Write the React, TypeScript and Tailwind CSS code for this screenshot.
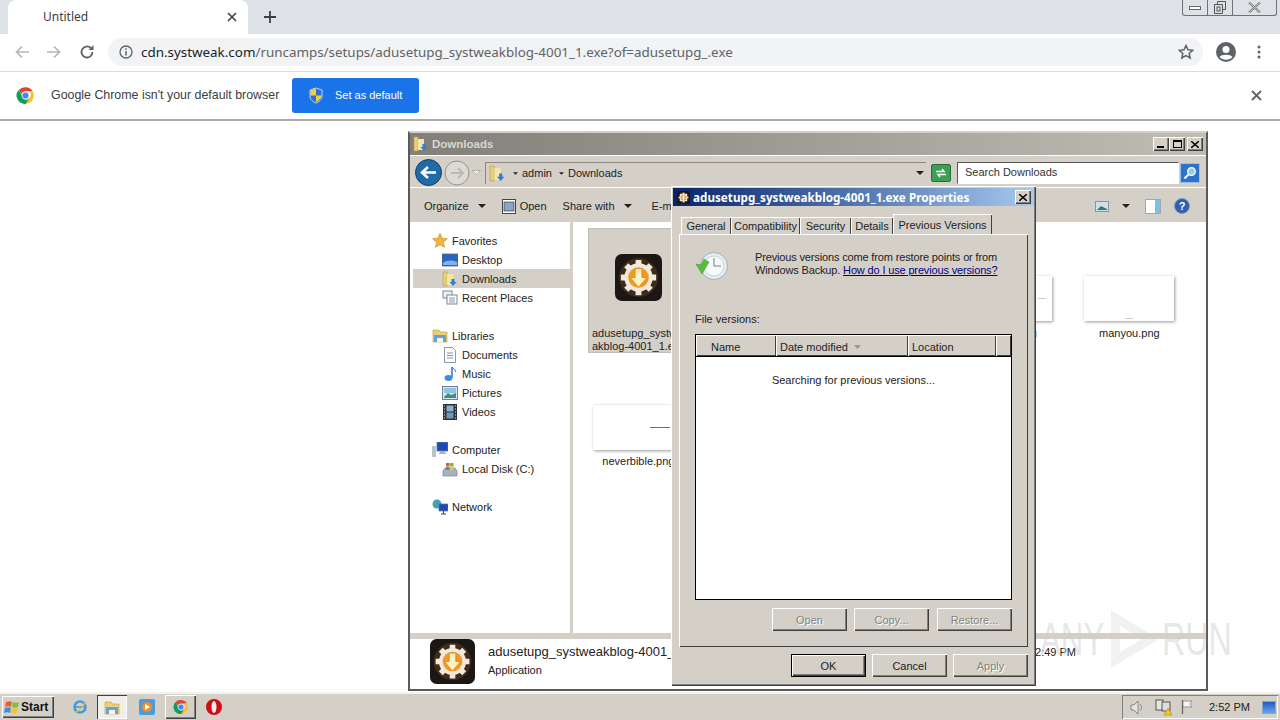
import type { ReactNode } from 'react';

const RAISED = 'shadow-[inset_1px_1px_0_#fff,inset_-1px_-1px_0_#404040,inset_-2px_-2px_0_#808080]';

const ChromeLogo = ({ size = 20 }: { size?: number }) => (
  <svg width={size} height={size} viewBox="0 0 48 48">
    <path d="M24 3a21 21 0 0 1 18.2 10.5H24a10.5 10.5 0 0 0-9.9 7L7 10A21 21 0 0 1 24 3z" fill="#db4437" />
    <path d="M42.2 13.5A21 21 0 0 1 25 45l9-15.5a10.5 10.5 0 0 0-1.5-16z" fill="#fbc02d" />
    <path d="M25 45A21 21 0 0 1 7 10l9 15.5a10.5 10.5 0 0 0 12.5 8.9l5.5-4.9z" fill="#0f9d58" />
    <circle cx="24" cy="24" r="9" fill="#4285f4" stroke="#fff" strokeWidth="2" />
  </svg>
);

const Shield = () => (
  <svg width="16" height="17" viewBox="0 0 16 17">
    <path d="M8 1l6 2v6c0 3.500-3 6-6 7-3-1-6-3.500-6-7V3z" fill="#2f6fd0" stroke="#e8eef8" strokeWidth="0.8" />
    <path d="M8 1.500V8.500H2.500V3.500z" fill="#f5cf3a" />
    <path d="M8 8.500h5.500c-.3 3-3 5.500-5.500 6.500z" fill="#f5cf3a" />
  </svg>
);

const GearApp = ({ size }: { size: number }) => (
  <svg width={size} height={size} viewBox="0 0 48 48" className="shrink-0">
    <rect width="48" height="48" rx="7" fill="#1b1714" />
    <circle cx="24" cy="24" r="20" fill="#5c3d1c" opacity="0.55" />
    <g stroke="#efe9df" strokeWidth="6">
      <path d="M24 6v36M6 24h36M11.500 11.500l25 25M36.500 11.500l-25 25" />
    </g>
    <circle cx="24" cy="24" r="14.500" fill="#efe9df" />
    <circle cx="24" cy="24" r="10.500" fill="#f09a1f" />
    <path d="M20.500 15h7v9h5L24 34l-8.500-10h5z" fill="#fff3c4" stroke="#e8791a" strokeWidth="0.8" />
  </svg>
);

const FolderDown = ({ size = 16 }: { size?: number }) => (
  <svg width={size} height={size} viewBox="0 0 16 16" className="shrink-0">
    <path d="M1 1h4v14H1z" fill="#e9cf78" stroke="#b89b45" strokeWidth="0.6" />
    <path d="M5 3h6v11H5z" fill="#f4e6a8" />
    <path d="M9.500 8h3v3h2l-3.500 4-3.500-4h2z" fill="#2d7fd3" />
  </svg>
);

const Star = () => (
  <svg width="17" height="17" viewBox="0 0 16 16">
    <path d="M8 .8l2.200 4.800 5.200.6-3.900 3.500 1.100 5.200L8 12.300l-4.600 2.600 1.100-5.200L.6 6.200l5.200-.6z" fill="#f2b33d" stroke="#c98a24" strokeWidth="0.6" />
  </svg>
);

const Monitor = () => (
  <svg width="16" height="14" viewBox="0 0 16 14">
    <rect width="16" height="12" y="1" fill="#2c62c0" stroke="#5a6a80" strokeWidth="0.8" />
    <path d="M1 10c4-3 9-3 14-1v3H1z" fill="#7fb2ee" />
  </svg>
);

const DocIcon = () => (
  <svg width="14" height="16" viewBox="0 0 14 16">
    <path d="M1.500 .5h8l3 3v12h-11z" fill="#fff" stroke="#8c98a8" />
    <path d="M4 6h6M4 8.500h6M4 11h6" stroke="#7f8fa5" />
  </svg>
);

const RecentIcon = () => (
  <svg width="16" height="16" viewBox="0 0 16 16">
    <rect x="1" y="1" width="9" height="7" fill="#eef1f4" stroke="#7d8794" />
    <rect x="5" y="5" width="10" height="9" fill="#fff" stroke="#7d8794" />
    <path d="M7 8h6M7 10h6M7 12h6" stroke="#8996a5" />
  </svg>
);

const LibraryIcon = () => (
  <svg width="16" height="15" viewBox="0 0 16 15">
    <path d="M1 2h6l1 2h7v10H1z" fill="#e9cf78" stroke="#b89b45" strokeWidth="0.6" />
    <path d="M2 7h12v7H2z" fill="#6aa3cf" />
    <path d="M5 14v-4h6v4" fill="#f2f6fa" />
  </svg>
);

const MusicIcon = () => (
  <svg width="16" height="16" viewBox="0 0 16 16">
    <path d="M10 1v10.500" stroke="#2f7fd0" strokeWidth="1.600" />
    <path d="M10 1c1 2 4 2 3.500 5" stroke="#2f7fd0" fill="none" />
    <ellipse cx="6.500" cy="12" rx="4" ry="3" fill="#3f8fe0" />
  </svg>
);

const PictureIcon = () => (
  <svg width="16" height="14" viewBox="0 0 16 14">
    <rect x=".5" y=".5" width="15" height="13" fill="#dbe6ee" stroke="#75808c" />
    <rect x="2" y="2" width="12" height="5" fill="#8fc4e4" />
    <path d="M2 11l4-4 3 2 5-2v5H2z" fill="#3d8f7e" />
  </svg>
);

const VideoIcon = () => (
  <svg width="14" height="16" viewBox="0 0 14 16">
    <rect width="14" height="16" fill="#2c3138" />
    <rect x="3.500" y="1.500" width="7" height="6" fill="#8ab0d0" />
    <rect x="3.500" y="8.500" width="7" height="6" fill="#6f97bb" />
    <path d="M1 2h1M1 5h1M1 8h1M1 11h1M1 14h1M12 2h1M12 5h1M12 8h1M12 11h1M12 14h1" stroke="#dfe6ec" />
  </svg>
);

const ComputerIcon = () => (
  <svg width="16" height="15" viewBox="0 0 16 15">
    <rect x="0" y="4" width="4" height="11" fill="#b8c2cc" />
    <rect x="5" y="0" width="11" height="9" fill="#1d49b8" stroke="#6c7c90" strokeWidth="0.8" />
    <path d="M8 9h5l1 3H7z" fill="#a9b3bf" />
  </svg>
);

const DiskIcon = () => (
  <svg width="16" height="16" viewBox="0 0 16 16">
    <path d="M1 10l2-3h10l2 3v5H1z" fill="#a7b2bd" stroke="#6b7683" strokeWidth="0.6" />
    <rect x="4" y="2" width="3.500" height="3.500" fill="#e2582f" />
    <rect x="8" y="2" width="3.500" height="3.500" fill="#7fba3c" />
    <rect x="4" y="6" width="3.500" height="3" fill="#3f8fe0" />
    <rect x="8" y="6" width="3.500" height="3" fill="#f5c32e" />
  </svg>
);

const NetworkIcon = () => (
  <svg width="16" height="16" viewBox="0 0 16 16">
    <circle cx="5" cy="5" r="4.500" fill="#3a9fd8" />
    <path d="M2 3c2-1 3 1 3 2S3 7 2 5z" fill="#57b04a" />
    <rect x="7" y="5" width="9" height="7" fill="#1d49b8" stroke="#66768a" strokeWidth="0.7" />
    <path d="M11.500 12v3M9 15h5" stroke="#3c4654" />
  </svg>
);

const ClockIcon = () => (
  <svg width="34" height="32" viewBox="0 0 34 32" className="shrink-0">
    <circle cx="19" cy="16" r="13.500" fill="#e6edf0" stroke="#9fb0b8" />
    <circle cx="19" cy="16" r="10" fill="#f7fafa" stroke="#c6d2d6" />
    <path d="M19 8v8h7" stroke="#6e7f88" fill="none" />
    <path d="M1 14l5 1 3-6 5 3-7 12z" fill="#5cba3c" stroke="#3d8f2a" strokeWidth="0.5" />
  </svg>
);

const Caret = ({ small }: { small?: boolean }) => (
  <svg width={small ? 5 : 8} height={small ? 3 : 4} viewBox="0 0 8 4" className="shrink-0">
    <path d="M0 0h8L4 4z" fill="#222" />
  </svg>
);

const TitleBtn = ({ children }: { children: ReactNode }) => (
  <div className={`w-[16px] h-[14px] bg-[#d4d0c8] flex items-center justify-center ${RAISED}`}>{children}</div>
);

const NavRow = ({ icon, label, child, active }: { icon: ReactNode; label: string; child?: boolean; active?: boolean }) => (
  <div className={`h-[19px] flex items-center ${child ? 'pl-[29px]' : 'pl-[19px]'} ${active ? 'bg-[#d4d0c8]' : ''}`}>
    <span className="w-[16px] flex justify-center shrink-0">{icon}</span>
    <span className="ml-[4px] pt-[2px]">{label}</span>
  </div>
);

const DisabledBtn = ({ label, className = '' }: { label: string; className?: string }) => (
  <div className={`w-[75px] h-[23px] pt-[2px] flex items-center justify-center text-[#85827a] [text-shadow:1px_1px_0_#fff] ${RAISED} ${className}`}>
    {label}
  </div>
);

const Tab = ({ label, w }: { label: string; w: string }) => (
  <div className={`${w} h-[17px] pt-[2px] flex items-center justify-center bg-[#d4d0c8] shadow-[inset_1px_1px_0_#fff,inset_-1px_0_0_#404040]`}>{label}</div>
);

const HeaderCell = ({ className, children }: { className: string; children?: ReactNode }) => (
  <div className={`flex items-center pt-[3px] shadow-[inset_1px_1px_0_#fff,inset_-1px_-1px_0_#404040] ${className}`}>{children}</div>
);

export default function App() {
  return (
    <div className="relative w-[1280px] h-[720px] overflow-hidden bg-white flex flex-col text-[#222] font-['Liberation_Sans',sans-serif]">
      {/* chrome tab strip */}
      <div className="h-[34px] shrink-0 bg-[#dee1e6] flex items-end pl-[8px] relative font-['Noto_Sans',sans-serif]">
        <div className="w-[240px] h-[34px] bg-white rounded-t-[8px] flex items-center pl-[35px] pr-[11px] text-[12px] text-[#3c4043]">
          <span className="flex-1">Untitled</span>
          <svg width="10" height="10" viewBox="0 0 10 10"><path d="M1 1l8 8M9 1l-8 8" stroke="#3c4043" strokeWidth="1.600" /></svg>
        </div>
        <svg width="12" height="12" viewBox="0 0 12 12" className="ml-[16px] mb-[11px]"><path d="M6 0v12M0 6h12" stroke="#3c4043" strokeWidth="1.800" /></svg>
        <div className="absolute top-0 right-[3px] w-[95px] h-[16px] flex rounded-b-[3px] border border-t-0 border-[#6d7178] text-[#444]">
          <div className="w-[25px] flex items-center justify-center border-r border-[#6d7178]"><div className="w-[12px] h-[4px] border border-[#666] bg-white" /></div>
          <div className="w-[25px] flex items-center justify-center border-r border-[#6d7178]">
            <svg width="12" height="13" viewBox="0 0 12 13"><path d="M3.500 3V.5h8v8H9M.5 3.500h8v9h-8z" fill="none" stroke="#555" /><rect x="3" y="6" width="3" height="4" fill="none" stroke="#555" /></svg>
          </div>
          <div className="flex-1 flex items-center justify-center">
            <svg width="13" height="11" viewBox="0 0 13 11"><path d="M1 .5l11 10M12 .5L1 10.500" stroke="#666" strokeWidth="2" /><path d="M1 .5l11 10M12 .5L1 10.500" stroke="#fff" strokeWidth="0.7" /></svg>
          </div>
        </div>
      </div>

      {/* chrome toolbar */}
      <div className="h-[38px] shrink-0 flex items-center border-b border-[#dadce0] pb-px font-['Noto_Sans',sans-serif]">
        <div className="w-[108px] flex items-center pl-[15px] gap-[18px]">
          <svg width="14" height="14" viewBox="0 0 14 14"><path d="M14 7H2M7 1.500L1.500 7 7 12.500" fill="none" stroke="#b4b7bb" strokeWidth="1.700" /></svg>
          <svg width="14" height="14" viewBox="0 0 14 14"><path d="M0 7h12M7 1.500L12.500 7 7 12.500" fill="none" stroke="#b4b7bb" strokeWidth="1.700" /></svg>
          <svg width="16" height="16" viewBox="0 0 16 16"><path d="M13.500 8A5.500 5.500 0 1 1 11.800 4" fill="none" stroke="#5f6368" strokeWidth="1.800" /><path d="M14.500 1v5h-5z" fill="#5f6368" /></svg>
        </div>
        <div className="w-[1095px] h-[28px] rounded-full bg-[#f1f3f4] flex items-center pl-[11px] pr-[9px]">
          <svg width="14" height="14" viewBox="0 0 14 14"><circle cx="7" cy="7" r="6" fill="none" stroke="#5f6368" strokeWidth="1.300" /><path d="M7 6v4.500M7 3.200v1.500" stroke="#5f6368" strokeWidth="1.500" /></svg>
          <div className="ml-[8px] flex-1 text-[13.400px] text-[#5f6368] whitespace-nowrap">
            <span className="text-[#202124]">cdn.systweak.com</span>/runcamps/setups/adusetupg_systweakblog-4001_1.exe?of=adusetupg_.exe
          </div>
          <svg width="16" height="16" viewBox="0 0 16 16"><path d="M8 1.500l2 4.300 4.700.5-3.500 3.100 1 4.600L8 11.600l-4.200 2.400 1-4.600-3.500-3.100 4.700-.5z" fill="none" stroke="#5f6368" strokeWidth="1.500" /></svg>
        </div>
        <svg width="20" height="20" viewBox="0 0 20 20" className="ml-[13px]"><circle cx="10" cy="10" r="10" fill="#5f6368" /><circle cx="10" cy="7.500" r="3.500" fill="#fff" /><path d="M3.500 15c2-3 11-3 13 0-3 3.500-10 3.500-13 0z" fill="#fff" /></svg>
        <svg width="4" height="14" viewBox="0 0 4 14" className="ml-[21px]"><circle cx="2" cy="2" r="1.500" fill="#5f6368" /><circle cx="2" cy="7" r="1.500" fill="#5f6368" /><circle cx="2" cy="12" r="1.500" fill="#5f6368" /></svg>
      </div>

      {/* default browser bar */}
      <div className="h-[49px] shrink-0 flex items-center pl-[16px] pr-[18px] border-b-2 border-[#a9a9a9] text-[12.400px] text-[#3c4043]">
        <ChromeLogo size={19} />
        <span className="ml-[16px] w-[241px]">Google Chrome isn't your default browser</span>
        <div className="w-[127px] h-[35px] rounded-[3px] bg-[#1a73e8] flex items-center pl-[16px] text-white text-[11px] gap-[11px]">
          <Shield />
          <span>Set as default</span>
        </div>
        <svg width="11" height="11" viewBox="0 0 11 11" className="ml-auto"><path d="M1 1l9 9M10 1l-9 9" stroke="#5f6368" strokeWidth="1.800" /></svg>
      </div>

      {/* page area */}
      <div className="flex-1 relative bg-white">
        {/* explorer window */}
        <div className="absolute left-[408px] top-[10px] w-[800px] h-[560px] bg-white border-2 border-[#5a5a5a] border-t-[#d4d0c8] flex flex-col text-[11px] leading-none">
          <div className="h-[22px] shrink-0 bg-gradient-to-r from-[#807f79] to-[#c0bdb5] flex items-center pl-[3px] pr-[3px]">
            <FolderDown />
            <span className="ml-[3px] pt-[2px] font-bold text-[#d8d6d0] text-[11.500px]">Downloads</span>
            <div className="ml-auto flex">
              <TitleBtn><div className="w-[7px] h-[2px] bg-black mt-[6px] -ml-[2px]" /></TitleBtn>
              <TitleBtn><div className="w-[9px] h-[8px] border border-black border-t-2" /></TitleBtn>
              <div className="ml-[2px]">
                <TitleBtn><svg width="8" height="7" viewBox="0 0 8 7"><path d="M0 0l8 7M8 0L0 7" stroke="#000" strokeWidth="1.400" /></svg></TitleBtn>
              </div>
            </div>
          </div>
          <div className="h-[33px] shrink-0 bg-[#d4d0c8] border-y border-white flex items-center pl-[5px] pr-[3px] pt-[2px]">
            <svg width="27" height="27" viewBox="0 0 27 27"><circle cx="13.500" cy="13.500" r="13" fill="#1f6ba8" stroke="#0d3c66" /><path d="M21 13.500H9M13 8l-6 5.500 6 5.500" fill="none" stroke="#fff" strokeWidth="2.600" /></svg>
            <svg width="26" height="26" viewBox="0 0 26 26" className="ml-[2px]"><circle cx="13" cy="13" r="12" fill="#dcdad4" stroke="#96948e" /><path d="M7 13h11M14 8l5 5-5 5" fill="none" stroke="#bbb9b3" strokeWidth="2" /></svg>
            <svg width="9" height="5" viewBox="0 0 9 5" className="ml-[2px]"><path d="M.5.5h8L4.500 4.500z" fill="#f5f4f1" stroke="#8f8d87" strokeWidth="0.6" /></svg>
            <div className="ml-[4px] w-[441px] h-[22px] bg-[#d4d0c8] border-l border-t border-[#8a8880] flex items-center pl-[3px] gap-[4px] text-[#222]">
              <FolderDown size={17} />
              <div className="ml-[3px]"><Caret small /></div>
              <span>admin</span>
              <div className="ml-[3px]"><Caret small /></div>
              <span>Downloads</span>
              <div className="ml-auto mr-[2px]"><Caret /></div>
            </div>
            <div className="w-[20px] h-[18px] ml-[5px] rounded-[2px] bg-[#3e9e55] border border-[#296b3a] flex items-center justify-center">
              <svg width="14" height="10" viewBox="0 0 14 10"><path d="M2 3.500h8L8 1M12 6.500H4l2 2.500" fill="none" stroke="#fff" strokeWidth="1.400" /></svg>
            </div>
            <div className="ml-[6px] w-[222px] h-[22px] bg-white border border-[#555] border-r-white border-b-white flex items-center pl-[7px] text-[#333]">Search Downloads</div>
            <div className="w-[20px] h-[20px] ml-px bg-[#2d74c8] border border-[#9cc1ea] flex items-center justify-center">
              <svg width="14" height="14" viewBox="0 0 14 14"><circle cx="8.500" cy="5.500" r="3.800" fill="#8dd0ee" stroke="#fff" strokeWidth="1.300" /><path d="M5.500 8.500L1.500 12.500" stroke="#fff" strokeWidth="2" /></svg>
            </div>
          </div>
          <div className="h-[34px] shrink-0 bg-[#d4d0c8] flex items-center pl-[14px] pr-[16px] pt-[2px] text-[#222]">
            <span>Organize</span>
            <div className="ml-[9px]"><Caret /></div>
            <svg width="14" height="15" viewBox="0 0 14 15" className="ml-[16px]"><rect x=".5" y=".5" width="13" height="14" fill="#fff" stroke="#444" /><rect x="2" y="3" width="10" height="9" fill="#8aa5c6" stroke="#223" strokeWidth="0.6" /></svg>
            <span className="ml-[4px]">Open</span>
            <span className="ml-[16px]">Share with</span>
            <div className="ml-[9px]"><Caret /></div>
            <span className="ml-[20px]">E-mail</span>
            <div className="ml-auto flex items-center">
              <svg width="14" height="11" viewBox="0 0 14 11"><rect x=".5" y=".5" width="13" height="10" fill="#cfe0ea" stroke="#8895a0" /><path d="M2 9l4-4 6 3v1z" fill="#2f7d72" /></svg>
              <div className="ml-[13px]"><Caret /></div>
              <svg width="16" height="15" viewBox="0 0 16 15" className="ml-[15px]"><rect x=".5" y=".5" width="15" height="14" fill="#fff" stroke="#a0a8b0" /><rect x="10" y="1" width="5" height="13" fill="#7fc0dc" /></svg>
              <svg width="16" height="16" viewBox="0 0 16 16" className="ml-[13px]"><circle cx="8" cy="8" r="7.500" fill="#2f5fb0" stroke="#8796c0" /><text x="8" y="12" fontSize="11" fontWeight="700" fill="#fff" textAnchor="middle">?</text></svg>
            </div>
          </div>
          <div className="flex-1 flex min-h-0">
            <div className="w-[157px] shrink-0 border-r-[3px] border-[#d4d0c8] pt-[9px] pl-[3px] box-content">
              <NavRow icon={<Star />} label="Favorites" />
              <NavRow child icon={<Monitor />} label="Desktop" />
              <NavRow child active icon={<FolderDown />} label="Downloads" />
              <NavRow child icon={<RecentIcon />} label="Recent Places" />
              <div className="h-[19px]" />
              <NavRow icon={<LibraryIcon />} label="Libraries" />
              <NavRow child icon={<DocIcon />} label="Documents" />
              <NavRow child icon={<MusicIcon />} label="Music" />
              <NavRow child icon={<PictureIcon />} label="Pictures" />
              <NavRow child icon={<VideoIcon />} label="Videos" />
              <div className="h-[19px]" />
              <NavRow icon={<ComputerIcon />} label="Computer" />
              <NavRow child icon={<DiskIcon />} label="Local Disk (C:)" />
              <div className="h-[19px]" />
              <NavRow icon={<NetworkIcon />} label="Network" />
            </div>
            <div className="flex-1 grid grid-cols-[repeat(5,122.750px)] grid-rows-[125px_auto] content-start pl-[4px] pt-[6px] gap-y-[52px]">
              <div className="w-[100px] ml-[11px] bg-[#d4d0c8] flex flex-col items-center pt-[25px] border border-[#c3bfb7]">
                <GearApp size={47} />
                <div className="mt-[26px] pl-[3px] self-start leading-[13px] whitespace-pre">{'adusetupg_systweak\nakblog-4001_1.exe'}</div>
              </div>
              <div />
              <div />
              <div className="flex flex-col items-center pt-[48px]">
                <div className="w-[90px] h-[45px] bg-white shadow-[1px_1px_3px_#999] flex justify-end items-center pr-[6px]"><div className="w-[8px] h-px bg-[#ccc]" /></div>
                <span className="mt-[7px]">lettering.png</span>
              </div>
              <div className="flex flex-col items-center pt-[48px]">
                <div className="w-[90px] h-[45px] bg-white shadow-[1px_1px_3px_#999] flex items-end justify-center pb-[2px]"><div className="w-[8px] h-px bg-[#ccc]" /></div>
                <span className="mt-[7px]">manyou.png</span>
              </div>
              <div className="flex flex-col items-center col-start-1">
                <div className="w-[90px] h-[45px] bg-white shadow-[1px_1px_3px_#999] flex items-center justify-center pl-[44px]"><div className="w-[20px] h-px bg-[#e8413a]" /></div>
                <span className="mt-[6px] text-center">neverbible.png</span>
              </div>
            </div>
          </div>
          <div className="h-[6px] shrink-0 bg-[#d4d0c8]" />
          <div className="h-[50px] shrink-0 flex items-center pl-[20px] pr-[130px] pb-[5px]">
            <GearApp size={45} />
            <div className="ml-[13px] mb-[2px] flex flex-col gap-[7px]">
              <span className="text-[13px]">adusetupg_systweakblog-4001_1.exe</span>
              <span>Application</span>
            </div>
            <span className="ml-auto mb-[18px]">2:49 PM</span>
          </div>
        </div>

        {/* properties dialog */}
        <div className="absolute left-[671px] top-[65px] w-[365px] h-[500px] bg-[#d4d0c8] shadow-[inset_1px_1px_0_#fff,inset_-1px_-1px_0_#404040,inset_-2px_-2px_0_#808080] p-[2px] flex flex-col text-[11px] leading-none">
          <div className="h-[18px] shrink-0 bg-gradient-to-r from-[#0a246a] to-[#a6caf0] flex items-center pl-[4px] pr-[3px] text-white">
            <GearApp size={13} />
            <span className="ml-[3px] pt-[2px] font-bold text-[11.700px] font-['Noto_Sans',sans-serif]">adusetupg_systweakblog-4001_1.exe Properties</span>
            <div className="ml-auto"><TitleBtn><svg width="8" height="7" viewBox="0 0 8 7"><path d="M0 0l8 7M8 0L0 7" stroke="#000" strokeWidth="1.400" /></svg></TitleBtn></div>
          </div>
          <div className="mt-[8px] ml-[8px] flex items-end h-[20px] text-[#222]">
            <Tab label="General" w="w-[50px]" />
            <Tab label="Compatibility" w="w-[69px]" />
            <Tab label="Security" w="w-[51px]" />
            <Tab label="Details" w="w-[42px]" />
            <div className="w-[99px] h-[20px] flex items-start pt-[6px] justify-center bg-[#d4d0c8] relative z-10 shadow-[inset_1px_1px_0_#fff,inset_-1px_0_0_#404040]">Previous Versions</div>
          </div>
          <div className="mx-[6px] h-[413px] shrink-0 shadow-[inset_1px_1px_0_#fff,inset_-1px_-1px_0_#404040] pt-[16px] px-[16px] flex flex-col">
            <div className="flex h-[32px]">
              <ClockIcon />
              <div className="ml-[26px] pt-px leading-[13px] whitespace-nowrap tracking-[-0.15px]">
                Previous versions come from restore points or from
                <br />
                Windows Backup. <span className="text-[#000080] underline">How do I use previous versions?</span>
              </div>
            </div>
            <div className="mt-[32px]">File versions:</div>
            <div className="mt-[9px] h-[266px] border border-black bg-white flex flex-col">
              <div className="h-[22px] shrink-0 flex bg-[#d4d0c8] border-b border-black">
                <HeaderCell className="w-[80px] pl-[15px]">Name</HeaderCell>
                <HeaderCell className="w-[132px] pl-[4px]">
                  Date modified
                  <svg width="7" height="4" viewBox="0 0 7 4" className="ml-[6px]"><path d="M0 0h7L3.500 4z" fill="#9a978f" /></svg>
                </HeaderCell>
                <HeaderCell className="w-[88px] pl-[4px]">Location</HeaderCell>
                <HeaderCell className="flex-1" />
              </div>
              <div className="pt-[18px] text-center">Searching for previous versions...</div>
            </div>
            <div className="mt-[8px] flex justify-end gap-[7px]">
              <DisabledBtn label="Open" />
              <DisabledBtn label="Copy..." />
              <DisabledBtn label="Restore..." className="ml-px" />
            </div>
          </div>
          <div className="mt-[7px] mr-[6px] flex justify-end gap-[6px] text-[#222]">
            <div className={`w-[75px] h-[23px] pt-[2px] flex items-center justify-center border border-black ${RAISED}`}>OK</div>
            <div className={`w-[75px] h-[23px] pt-[2px] flex items-center justify-center ${RAISED}`}>Cancel</div>
            <DisabledBtn label="Apply" />
          </div>
        </div>

        {/* watermark */}
        <div className="absolute left-[1040px] top-[486px] w-[192px] h-[64px] flex items-center text-[46px] leading-none text-[#cfcfcf]/50 pointer-events-none">
          <span className="w-[65px] shrink-0 origin-left scale-x-[0.68] whitespace-nowrap">ANY</span>
          <svg width="60" height="62" viewBox="0 0 60 62" className="shrink-0"><path d="M6 2v58l48-29zM15 18v26l22-13z" fill="#cfcfcf" fillOpacity="0.3" fillRule="evenodd" /></svg>
          <span className="w-[67px] shrink-0 -ml-[3px] origin-left scale-x-[0.7] whitespace-nowrap">RUN</span>
        </div>
      </div>

      {/* taskbar */}
      <div className="h-[28px] shrink-0 bg-[#d4d0c8] border-t-2 border-[#f3f2ee] flex items-center pl-[2px] pr-[2px] text-[12px] leading-none">
        <div className={`w-[52px] h-[22px] flex items-center pl-[2px] font-bold text-[#111] ${RAISED}`}>
          <svg width="17" height="15" viewBox="0 0 17 15">
            <path d="M2 2c2-1 4-1 6 0l-1 5c-2-1-4-1-6 0z" fill="#e8622c" />
            <path d="M9 2c2 1 4 1 6 0l-1 5c-2 1-4 1-6 0z" fill="#86bb3c" />
            <path d="M1 8c2-1 4-1 6 0l-1 5c-2-1-4-1-6 0z" fill="#3f8fe0" />
            <path d="M8 8c2 1 4 1 6 0l-1 5c-2 1-4 1-6 0z" fill="#f5c32e" />
          </svg>
          <span>Start</span>
        </div>
        <svg width="16" height="16" viewBox="0 0 16 16" className="ml-[18px]"><circle cx="8" cy="8" r="5.500" fill="none" stroke="#3f9be0" strokeWidth="2.500" /><path d="M3 8h10" stroke="#3f9be0" strokeWidth="1.500" /><path d="M2 13c3 1 9-4 12-11" fill="none" stroke="#e4c04a" strokeWidth="1.200" /></svg>
        <div className="ml-[9px] w-[30px] h-[24px] bg-[#f0eee9] flex items-center justify-center shadow-[inset_1px_1px_0_#404040,inset_-1px_-1px_0_#fff]">
          <LibraryIcon />
        </div>
        <div className="ml-[12px] w-[16px] h-[16px] rounded-[2px] bg-[#4a9be0] flex items-center justify-center">
          <div className="w-[10px] h-[10px] rounded-full bg-[#f09020] flex items-center justify-center">
            <div className="w-0 h-0 border-y-[3px] border-y-transparent border-l-[5px] border-l-white ml-px" />
          </div>
        </div>
        <div className={`ml-[10px] w-[31px] h-[24px] flex items-center justify-center ${RAISED}`}><ChromeLogo size={16} /></div>
        <svg width="16" height="16" viewBox="0 0 16 16" className="ml-[10px]"><circle cx="8" cy="8" r="8" fill="#cc0f16" /><ellipse cx="8" cy="8" rx="2.500" ry="6" fill="#f7e9e9" /></svg>
        <div className="ml-auto w-[156px] h-[24px] flex items-center pl-[8px] shadow-[inset_1px_1px_0_#808080,inset_-1px_-1px_0_#fff] text-[11px]">
          <svg width="14" height="15" viewBox="0 0 14 15"><path d="M1 5h3l4-4v13l-4-4H1z" fill="#e8e6e0" stroke="#666" strokeWidth="0.7" /><path d="M10 4c2 2 2 5 0 7" fill="none" stroke="#888" /></svg>
          <svg width="17" height="17" viewBox="0 0 17 17" className="ml-[11px]"><rect x="1" y="1" width="7" height="10" fill="#e8e6e0" stroke="#555" /><rect x="7" y="3" width="8" height="9" fill="#ddd" stroke="#555" /><path d="M9 16l4-7 4 7z" fill="#f5c518" stroke="#a07a10" strokeWidth="0.5" /></svg>
          <svg width="14" height="16" viewBox="0 0 14 16" className="ml-[9px]"><path d="M1.500 1v14" stroke="#666" strokeWidth="1.300" /><path d="M2 2h9l-2 3 2 3H2z" fill="#f4f3ef" stroke="#777" strokeWidth="0.7" /></svg>
          <span className="ml-[14px] text-[#222]">2:52 PM</span>
          <div className="ml-auto mr-[2px] w-[14px] h-[13px] bg-gradient-to-b from-[#1d5cc0] to-[#68a3ea] border border-[#8aa6c8]" />
        </div>
      </div>
    </div>
  );
}
